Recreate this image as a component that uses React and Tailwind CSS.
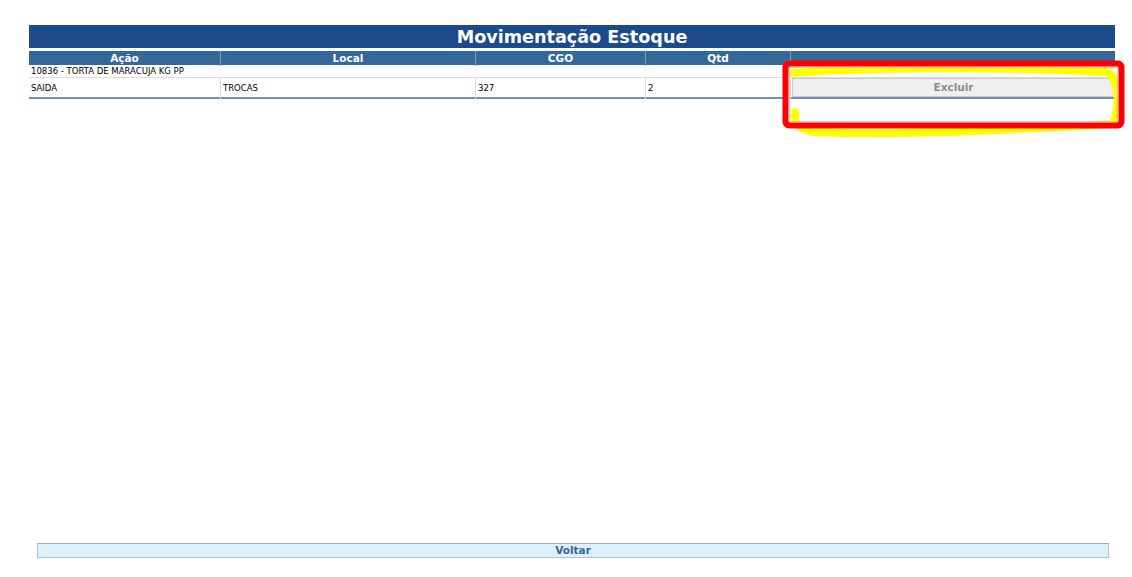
export default function App() {
  const font = { fontFamily: 'Tahoma, "DejaVu Sans", Verdana, sans-serif' };
  return (
    <div className="relative flex h-screen flex-col bg-white" style={font}>
      <div className="ml-[29px] mt-[25px] w-[1086px]">
        <div className="flex h-[23px] items-center justify-center bg-[#1b4b8a] pt-[3px] text-[17.6px] font-bold leading-none text-white">
          Movimentação Estoque
        </div>
        <div className="mt-[3px] grid h-[14px] grid-cols-[192px_255px_170px_145px_1fr] bg-[#35689a] text-[10.5px] font-bold leading-[15px] text-white">
          <div className="border-r border-[#7c9cbd] text-center">Ação</div>
          <div className="border-r border-[#7c9cbd] text-center">Local</div>
          <div className="border-r border-[#7c9cbd] text-center">CGO</div>
          <div className="border-r border-[#7c9cbd] text-center">Qtd</div>
          <div></div>
        </div>
        <div className="h-[13px] border-b border-[#dcdcdc] pl-[2px] text-[8.5px] leading-[12px] text-black">
          10836 - TORTA DE MARACUJA KG PP
        </div>
        <div className="grid h-[21px] grid-cols-[192px_255px_170px_145px_1fr] border-b-2 border-[#6f8fb3] text-[8.5px] leading-[21px] text-black">
          <div className="border-r border-[#dcdcdc] pl-[2px]">SAIDA</div>
          <div className="border-r border-[#dcdcdc] pl-[2px]">TROCAS</div>
          <div className="border-r border-[#dcdcdc] pl-[2px]">327</div>
          <div className="border-r border-[#dcdcdc] pl-[2px]">2</div>
          <div className="flex h-[19px] items-stretch pl-px">
            <button className="h-[19px] w-full border border-[#c8c8c8] bg-[#efefef] text-[10.5px] font-bold leading-none text-[#8c8c8c]" style={font}>
              Excluir
            </button>
          </div>
        </div>
      </div>
      <div className="mb-[19px] ml-[37px] mt-auto flex h-[15px] w-[1072px] items-center justify-center border border-[#a9c3da] border-t-[#9aaabb] bg-[#ddf0fd] pt-px text-[10.5px] font-bold text-[#336699]">
        Voltar
      </div>
      <svg className="pointer-events-none absolute left-0 top-0" width="1132" height="577" viewBox="0 0 1132 577">
        <path
          d="M794 73 C 850 68, 1000 66, 1108 72 C 1120 80, 1120 112, 1112 124 C 1000 130, 900 136, 812 132 C 798 128, 794 122, 795 112"
          fill="none"
          stroke="#ffff00"
          strokeWidth="8"
          strokeLinecap="round"
        />
        <rect x="786" y="64" width="335" height="61" rx="3" fill="none" stroke="#ff0000" strokeWidth="7" />
        <rect x="789" y="67" width="329" height="55" rx="1" fill="none" stroke="#ffffff" strokeWidth="1" />
      </svg>
    </div>
  );
}
